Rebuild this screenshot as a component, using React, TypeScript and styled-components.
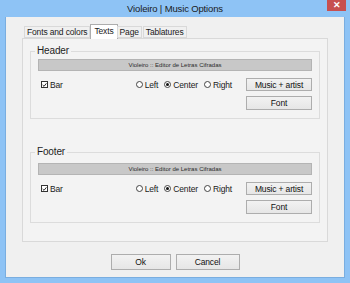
import styled, { createGlobalStyle } from "styled-components";

const GlobalStyle = createGlobalStyle`
  html, body {
    margin: 0;
    padding: 0;
    background: #ffffff;
  }
  body {
    font-family: "Liberation Sans", Arial, sans-serif;
    font-size: 9px;
    letter-spacing: -0.15px;
    color: #000;
  }
`;

const Frame = styled.div`
  width: 350px;
  height: 283px;
  box-sizing: border-box;
  background: #8ec3f5;
  display: flex;
  flex-direction: column;
  padding: 0 5px 5px;
`;

const TitleBar = styled.div`
  height: 17px;
  display: grid;
  grid-template-columns: 1fr auto 1fr;
  align-items: start;
`;

const Title = styled.div`
  grid-column: 2;
  line-height: 17px;
  font-size: 9.5px;
  color: #1a1a1a;
`;

const CloseButton = styled.div`
  grid-column: 3;
  justify-self: end;
  width: 19px;
  height: 11px;
  margin-right: -1px;
  background: #c75050;
  display: flex;
  align-items: center;
  justify-content: center;
  color: #fff;
  font-size: 9px;
  font-weight: bold;
  line-height: 1;
`;

const Client = styled.div`
  flex: 1;
  background: #f0f0f0;
  border: 1px solid #7aaee0;
  border-top: none;
  display: flex;
  flex-direction: column;
  padding: 7px 16px 0;
`;

const TabStrip = styled.div`
  height: 15px;
  display: flex;
  align-items: flex-end;
  padding-left: 2px;
  position: relative;
  z-index: 1;
  margin-bottom: -1px;
`;

const Tab = styled.div<{ $active?: boolean }>`
  box-sizing: border-box;
  height: ${({ $active }) => ($active ? "15px" : "12px")};
  padding: 0 ${({ $active }) => ($active ? "3px" : "2px")};
  margin: ${({ $active }) => ($active ? "0 -1px" : "0 1px 1px 0")};
  border: 1px solid ${({ $active }) => ($active ? "#adadad" : "#d9d9d9")};
  border-bottom: ${({ $active }) => ($active ? "none" : "1px solid #d9d9d9")};
  background: ${({ $active }) => ($active ? "#ffffff" : "#f0f0f0")};
  line-height: ${({ $active }) => ($active ? "13px" : "10px")};
  font-size: 8.5px;
  color: #1a1a1a;
`;

const Panel = styled.div`
  height: 204px;
  box-sizing: border-box;
  border: 1px solid #d9d9d9;
  background: #f3f3f3;
  padding: 6px 7px 0;
  display: flex;
  flex-direction: column;
  gap: 27px;
`;

const Group = styled.fieldset<{ $pad: number }>`
  margin: 0;
  padding: ${({ $pad }) => $pad}px 7px 8px;
  border: 1px solid #dcdcdc;
  display: flex;
  flex-direction: column;
  gap: 7px;
  min-width: 0;
`;

const Legend = styled.legend`
  padding: 0 2px;
  margin-left: -3px;
  font-size: 10px;
  line-height: 12px;
  color: #1e1e1e;
`;

const PreviewBar = styled.div`
  height: 12px;
  box-sizing: border-box;
  background: #c8c8c8;
  border: 1px solid #b4b4b4;
  text-align: center;
  font-size: 6px;
  letter-spacing: 0;
  line-height: 10px;
  color: #2a2a2a;
`;

const OptionsRow = styled.div`
  display: flex;
  align-items: flex-start;
`;

const InlineOptions = styled.div`
  flex: 1;
  height: 13px;
  display: flex;
  align-items: center;
  padding-left: 3px;
`;

const OptionLabel = styled.label`
  display: flex;
  align-items: center;
  gap: 2px;
  font-size: 8.5px;
  color: #1a1a1a;
  margin-right: 6px;

  &:last-child {
    margin-right: 14px;
  }
`;

const Spacer = styled.div`
  flex: 1;
`;

const CheckBox = styled.span`
  width: 7px;
  height: 7px;
  box-sizing: border-box;
  border: 1px solid #333;
  background: #fff;
  display: flex;
  align-items: center;
  justify-content: center;
`;

const Radio = styled.span<{ $checked?: boolean }>`
  width: 7px;
  height: 7px;
  box-sizing: border-box;
  border: 1px solid #444;
  border-radius: 50%;
  background: #fff;
  display: flex;
  align-items: center;
  justify-content: center;

  &::after {
    content: "";
    width: 3px;
    height: 3px;
    border-radius: 50%;
    background: ${({ $checked }) => ($checked ? "#111" : "transparent")};
  }
`;

const ButtonStack = styled.div`
  display: flex;
  flex-direction: column;
  gap: 5px;
`;

const Button = styled.div<{ $w: number; $h?: number }>`
  width: ${({ $w }) => $w}px;
  height: ${({ $h }) => $h ?? 14}px;
  box-sizing: border-box;
  border: 1px solid #adadad;
  background: linear-gradient(#f2f2f2, #e6e6e6);
  display: flex;
  align-items: center;
  justify-content: center;
  font-size: 8.5px;
  color: #111;
`;

const DialogButtons = styled.div`
  display: flex;
  justify-content: center;
  gap: 5px;
  margin-top: 12px;
`;

function Check() {
  return (
    <svg width="6" height="6" viewBox="0 0 6 6">
      <path d="M0.8 3 L2.4 4.6 L5.3 1" fill="none" stroke="#111" strokeWidth="1.1" />
    </svg>
  );
}

function TextGroup({ title, pad }: { title: string; pad: number }) {
  return (
    <Group $pad={pad}>
      <Legend>{title}</Legend>
      <PreviewBar>Violeiro :: Editor de Letras Cifradas</PreviewBar>
      <OptionsRow>
        <InlineOptions>
          <OptionLabel>
            <CheckBox>
              <Check />
            </CheckBox>
            Bar
          </OptionLabel>
          <Spacer />
          <OptionLabel>
            <Radio />
            Left
          </OptionLabel>
          <OptionLabel>
            <Radio $checked />
            Center
          </OptionLabel>
          <OptionLabel>
            <Radio />
            Right
          </OptionLabel>
        </InlineOptions>
        <ButtonStack>
          <Button $w={66} $h={13}>Music + artist</Button>
          <Button $w={66}>Font</Button>
        </ButtonStack>
      </OptionsRow>
    </Group>
  );
}

export default function App() {
  return (
    <>
      <GlobalStyle />
      <Frame>
        <TitleBar>
          <Title>Violeiro | Music Options</Title>
          <CloseButton>✕</CloseButton>
        </TitleBar>
        <Client>
          <TabStrip>
            <Tab>Fonts and colors</Tab>
            <Tab $active>Texts</Tab>
            <Tab>Page</Tab>
            <Tab>Tablatures</Tab>
          </TabStrip>
          <Panel>
            <TextGroup title="Header" pad={2} />
            <TextGroup title="Footer" pad={5} />
          </Panel>
          <DialogButtons>
            <Button $w={60} $h={16}>Ok</Button>
            <Button $w={64} $h={16}>Cancel</Button>
          </DialogButtons>
        </Client>
      </Frame>
    </>
  );
}
